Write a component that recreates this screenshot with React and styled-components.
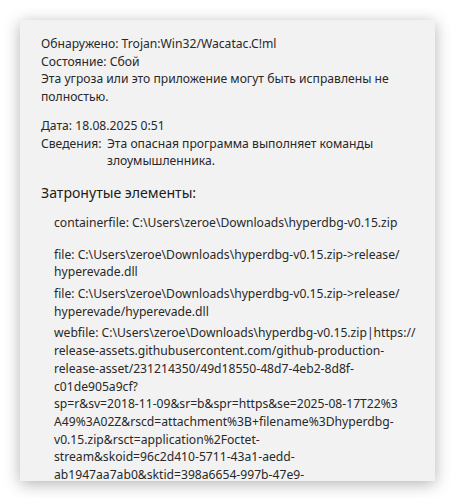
import React from "react";
import styled, { createGlobalStyle } from "styled-components";

const GlobalStyle = createGlobalStyle`
    body {
        margin: 0;
        background: #ffffff;
        font-family: "Noto Sans", "Open Sans", sans-serif;
    }
`

const Page = styled.div`
    padding: 20px;
`

const Panel = styled.section`
    box-sizing: border-box;
    width: 415px;
    height: 461px;
    padding: 15px 17px 0 21px;
    background: #f2f2f2;
    box-shadow: 0 3px 15px rgba(0, 0, 0, 0.3);
    overflow: hidden;
    color: #282828;
    font-size: 12.15px;
    line-height: 17.7px;
`

const Block = styled.div`
    margin-bottom: ${(p) => p.$gap || 0}px;
`

const Line = styled.div`
    white-space: nowrap;
`

const DetailRow = styled.div`
    display: grid;
    grid-template-columns: 66px 1fr;
`

const Heading = styled.h3`
    margin: 13px 0 11px;
    font-size: 14.1px;
    font-weight: 400;
    line-height: 20px;
    color: #1b1b1b;
`

const ItemList = styled.ul`
    margin: 0;
    padding: 0 0 0 13px;
    list-style: none;
`

const Item = styled.li`
    margin-bottom: ${(p) => p.$gap || 4}px;
`

const items = [
    { lines: ["containerfile: C:\\Users\\zeroe\\Downloads\\hyperdbg-v0.15.zip"], gap: 14 },
    { lines: ["file: C:\\Users\\zeroe\\Downloads\\hyperdbg-v0.15.zip->release/", "hyperevade.dll"] },
    { lines: ["file: C:\\Users\\zeroe\\Downloads\\hyperdbg-v0.15.zip->release/", "hyperevade/hyperevade.dll"] },
    {
        lines: [
            "webfile: C:\\Users\\zeroe\\Downloads\\hyperdbg-v0.15.zip|https://",
            "release-assets.githubusercontent.com/github-production-",
            "release-asset/231214350/49d18550-48d7-4eb2-8d8f-",
            "c01de905a9cf?",
            "sp=r&sv=2018-11-09&sr=b&spr=https&se=2025-08-17T22%3",
            "A49%3A02Z&rscd=attachment%3B+filename%3Dhyperdbg-",
            "v0.15.zip&rsct=application%2Foctet-",
            "stream&skoid=96c2d410-5711-43a1-aedd-",
            "ab1947aa7ab0&sktid=398a6654-997b-47e9-",
        ],
    },
]

function App() {
    return (
        <Page>
            <GlobalStyle />
            <Panel>
                <Block $gap={11}>
                    <Line>Обнаружено: Trojan:Win32/Wacatac.C!ml</Line>
                    <Line>Состояние: Сбой</Line>
                    <Line>Эта угроза или это приложение могут быть исправлены не</Line>
                    <Line>полностью.</Line>
                </Block>

                <Block>
                    <Line>Дата: 18.08.2025 0:51</Line>
                    <DetailRow>
                        <span>Сведения:</span>
                        <span>
                            <Line>Эта опасная программа выполняет команды</Line>
                            <Line>злоумышленника.</Line>
                        </span>
                    </DetailRow>
                </Block>

                <Heading>Затронутые элементы:</Heading>

                <ItemList>
                    {items.map((item, i) => (
                        <Item key={i} $gap={item.gap}>
                            {item.lines.map((line, j) => (
                                <Line key={j}>{line}</Line>
                            ))}
                        </Item>
                    ))}
                </ItemList>
            </Panel>
        </Page>
    )
}

export default App;
